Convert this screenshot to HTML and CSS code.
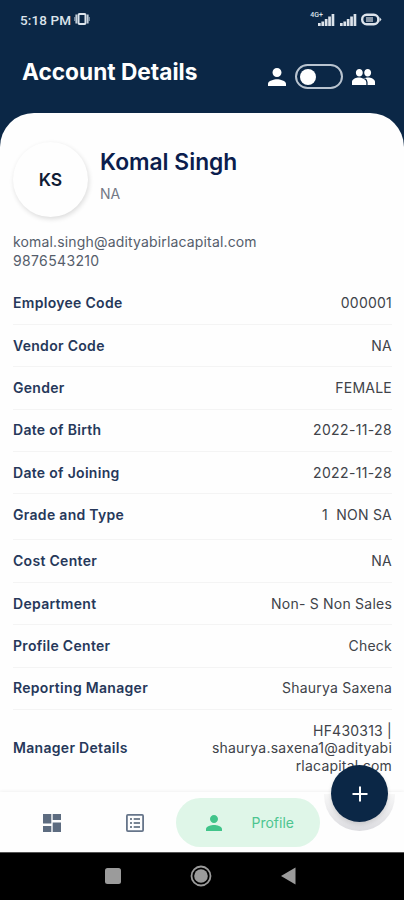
FILE: index.html
```html
<!DOCTYPE html>
<html lang="en">
<head>
<meta charset="utf-8">
<title>Account Details</title>
<link rel="stylesheet" href="styles.css">
</head>
<body>
<div class="phone">
  <div class="status">
    <span class="time">5:18 PM</span>
    <svg class="vibrate" width="16" height="12" viewBox="0 0 16 12"><rect x="4.500" y="1" width="7" height="10" rx="1" fill="none" stroke="#dce3eb" stroke-width="2"/><path d="M2.300 1.500v9M13.700 1.500v9" stroke="#c3cfdb" stroke-width="1.800"/><path d="M.8 4v4M15.200 4v4" stroke="#9fb0c2" stroke-width="1"/></svg>
    <div class="signals">
      <span class="net">4G+</span>
      <svg width="17" height="13" viewBox="0 0 17 13" fill="#dce3eb"><path d="M0 10h2.700v3H0zM3.400 8.500h2.700V13H3.400zM6.800 6h2.700v7H6.800zM10.200 3.500h2.700V13h-2.700zM13.600 1h2.700v12h-2.700z"/></svg>
      <svg class="second" width="17" height="13" viewBox="0 0 17 13" fill="#dce3eb"><path d="M0 10h2.700v3H0zM3.400 8.500h2.700V13H3.400zM6.800 6h2.700v7H6.800zM10.200 3.500h2.700V13h-2.700zM13.600 1h2.700v12h-2.700z"/></svg>
      <svg class="battery" width="21" height="13" viewBox="0 0 21 13"><rect x="1.200" y="1.700" width="16.100" height="9.600" rx="4.500" fill="none" stroke="#dce3eb" stroke-width="2.400"/><rect x="5" y="4" width="7" height="5" fill="#8795a5"/><path d="M18.500 4l2 2.500-2 2.500z" fill="#dce3eb"/></svg>
    </div>
  </div>
  <header class="header">
    <h1>Account Details</h1>
    <div class="switcher">
      <svg width="18" height="18" viewBox="4 4 16 16" fill="#fff"><path d="M12 12c2.210 0 4-1.790 4-4s-1.790-4-4-4-4 1.790-4 4 1.790 4 4 4zm0 2c-2.670 0-8 1.340-8 4v2h16v-2c0-2.660-5.330-4-8-4z"/></svg>
      <div class="toggle"><span class="knob"></span></div>
      <svg width="23" height="16" viewBox="1 5 22 14" fill="#fff" preserveAspectRatio="none"><path d="M16.500 12.500c-1.200 0-3.070.340-4.500 1-1.430-.670-3.300-1-4.500-1C5.330 12.500 1 13.700 1 16.250V19h22v-2.750c0-2.500-4.330-3.750-6.500-3.750zM8 11.600c1.830 0 3.300-1.470 3.300-3.300S9.830 5 8 5 4.700 6.470 4.700 8.300 6.170 11.600 8 11.600zm8 0c1.830 0 3.300-1.470 3.300-3.300S17.830 5 16 5c-1.830 0-3.300 1.470-3.300 3.300s1.470 3.300 3.300 3.300z"/><path d="M13 13.500q2.300 1.300 2.300 3V19" fill="none" stroke="#0b2746" stroke-width="1.200"/></svg>
    </div>
  </header>
  <main class="card">
    <section class="person">
      <div class="avatar">KS</div>
      <div class="names"><h2>Komal Singh</h2><p>NA</p></div>
    </section>
    <div class="contact"><p class="mail">komal.singh@adityabirlacapital.com</p><p class="tel">9876543210</p></div>
    <dl class="details">
      <div class="row"><dt>Employee Code</dt><dd>000001</dd></div>
      <div class="row"><dt>Vendor Code</dt><dd>NA</dd></div>
      <div class="row"><dt>Gender</dt><dd>FEMALE</dd></div>
      <div class="row"><dt>Date of Birth</dt><dd class="date">2022-11-28</dd></div>
      <div class="row"><dt>Date of Joining</dt><dd class="date">2022-11-28</dd></div>
      <div class="row grade"><dt>Grade and Type</dt><dd>1&nbsp; NON SA</dd></div>
      <div class="row"><dt>Cost Center</dt><dd>NA</dd></div>
      <div class="row"><dt>Department</dt><dd>Non- S Non Sales</dd></div>
      <div class="row"><dt>Profile Center</dt><dd>Check</dd></div>
      <div class="row"><dt>Reporting Manager</dt><dd>Shaurya Saxena</dd></div>
      <div class="row manager"><dt>Manager Details</dt><dd>HF430313 |<br>shaurya.saxena1@adityabi<br>rlacapital.com</dd></div>
    </dl>
  </main>
  <nav class="tabs">
    <div class="tab"><svg width="18" height="18" viewBox="3 3 18 18" fill="#5d6c80"><path d="M3 12.500h8.300V3H3zM3 21h8.300v-6H3zm9.700 0H21v-9.500h-8.300zm0-18v6H21V3z"/></svg></div>
    <div class="tab"><svg width="18" height="18" viewBox="0 0 18 18"><rect x=".9" y=".9" width="16.200" height="16.200" rx="1" fill="none" stroke="#66758a" stroke-width="1.800"/><path d="M4 5h2M4 9h2M4 13h2M7.700 5H14M7.700 9H14M7.700 13H14" stroke="#4e5d70" stroke-width="1.700"/></svg></div>
    <div class="tab active"><svg width="16" height="16" viewBox="4 4 16 16" fill="#41c48a"><path d="M12 12c2.210 0 4-1.790 4-4s-1.790-4-4-4-4 1.790-4 4 1.790 4 4 4zm0 2c-2.670 0-8 1.340-8 4v2h16v-2c0-2.660-5.330-4-8-4z"/></svg><span>Profile</span></div>
    <div class="notch"></div>
    <div class="fab"><svg width="16" height="16" viewBox="0 0 16 16" stroke="#fff" stroke-width="2"><path d="M8 .5v15M.5 8h15"/></svg></div>
  </nav>
  <footer class="system">
    <svg width="16" height="16"><rect width="16" height="16" rx="2.500" fill="#9b9b9b"/></svg>
    <svg width="22" height="22"><circle cx="11" cy="11" r="9.500" fill="none" stroke="#9b9b9b" stroke-width="1.800"/><circle cx="11" cy="11" r="6.800" fill="#9b9b9b"/></svg>
    <svg width="15" height="18"><path d="M0 9L14.500.5v17z" fill="#9b9b9b"/></svg>
  </footer>
</div>
</body>
</html>
```
FILE: styles.css
```css
* { box-sizing: border-box; margin: 0; padding: 0; }
body { background: #0b2746; font-family: Inter, sans-serif; }
svg { display: block; flex: none; }
.phone { width: 404px; height: 900px; display: flex; flex-direction: column; overflow: hidden; background: #0b2746; }
.status { height: 38px; display: flex; align-items: center; padding: 0 22px 0 20px; color: #dce3eb; flex: none; }
.time { font: 500 13.5px/16px Roboto, sans-serif; width: 54px; white-space: nowrap; letter-spacing: .1px; padding-top: 1px; }
.signals { display: flex; margin-left: auto; align-items: center; }
.net { font: 500 7px/8px Roboto, sans-serif; margin: -8px -5px 0 0; }
.second { margin-left: 5px; }
.battery { margin-left: 4px; }
.header { height: 75px; flex: none; display: flex; align-items: flex-start; justify-content: space-between; padding: 20px 29px 0 22px; color: #fff; }
h1 { font-size: 22.7px; line-height: 28px; font-weight: 700; white-space: nowrap; }
.switcher { display: flex; align-items: center; gap: 9px; padding-top: 6px; }
.toggle { width: 48px; height: 25px; border: 2px solid #b9c4d0; border-radius: 13px; padding: 3px; display: flex; align-items: center; }
.knob { width: 16px; height: 16px; border-radius: 50%; background: #fff; }
.card { height: 679px; flex: none; background: #fefefe; border-radius: 34px 34px 0 0; padding: 29px 12px 0 13px; overflow: hidden; }
.person { display: flex; gap: 12px; height: 75px; }
.avatar { width: 75px; height: 75px; border-radius: 50%; flex: none; background: #fefefe; box-shadow: 1px 2px 5px rgba(0,0,0,.14); display: flex; align-items: center; justify-content: center; font-size: 17.5px; font-weight: 600; color: #101c35; }
.names { padding-top: 5px; }
h2 { font-size: 22.8px; line-height: 30px; font-weight: 600; color: #0b1d4d; white-space: nowrap; }
.names p { font-size: 14px; line-height: 18px; margin-top: 8px; color: #737985; }
.contact { margin-top: 15px; font-size: 14px; line-height: 19px; color: #555d6b; }
.mail { letter-spacing: .16px; white-space: nowrap; }
.tel { letter-spacing: .35px; white-space: nowrap; }
.details { margin-top: 12.4px; }
.row { height: 42.4px; border-bottom: 1px solid #f4f4f4; display: flex; align-items: center; justify-content: space-between; white-space: nowrap; font-size: 14px; line-height: 17.600px; }
dt { font-weight: 600; letter-spacing: .3px; color: #26385a; }
dd { color: #404349; text-align: right; letter-spacing: .22px; }
.date { letter-spacing: .35px; }
.grade { height: 46px; padding-bottom: 4px; }
.manager { height: 76px; border: 0; }
.tabs { height: 60px; flex: none; background: #fefefe; box-shadow: 0 -1px 3px rgba(0,0,0,.05); display: flex; align-items: center; position: relative; padding-left: 10px; }
.tab { width: 83px; display: flex; justify-content: center; padding-top: 1px; }
.active { width: 144px; height: 49px; padding: 0 26px 0 30px; margin: 1px 0 0 0; border-radius: 25px; background: #dff6e8; justify-content: space-between; align-items: center; color: #4dc590; font-size: 14px; }
.notch { position: absolute; left: 324px; top: 2px; width: 71px; height: 37px; border-radius: 0 0 36px 36px; background: linear-gradient(#f7f7f7, #dcdce0); filter: blur(.7px); }
.fab { position: absolute; left: 331px; top: -27px; width: 57px; height: 57px; border-radius: 50%; background: #0b2746; display: flex; align-items: center; justify-content: center; box-shadow: 0 2px 4px rgba(0,0,0,.12); }
.system { height: 48px; flex: none; background: #000; border-top: 1px solid #555; display: flex; align-items: center; justify-content: space-between; padding: 0 108px 2px 105px; }
```
